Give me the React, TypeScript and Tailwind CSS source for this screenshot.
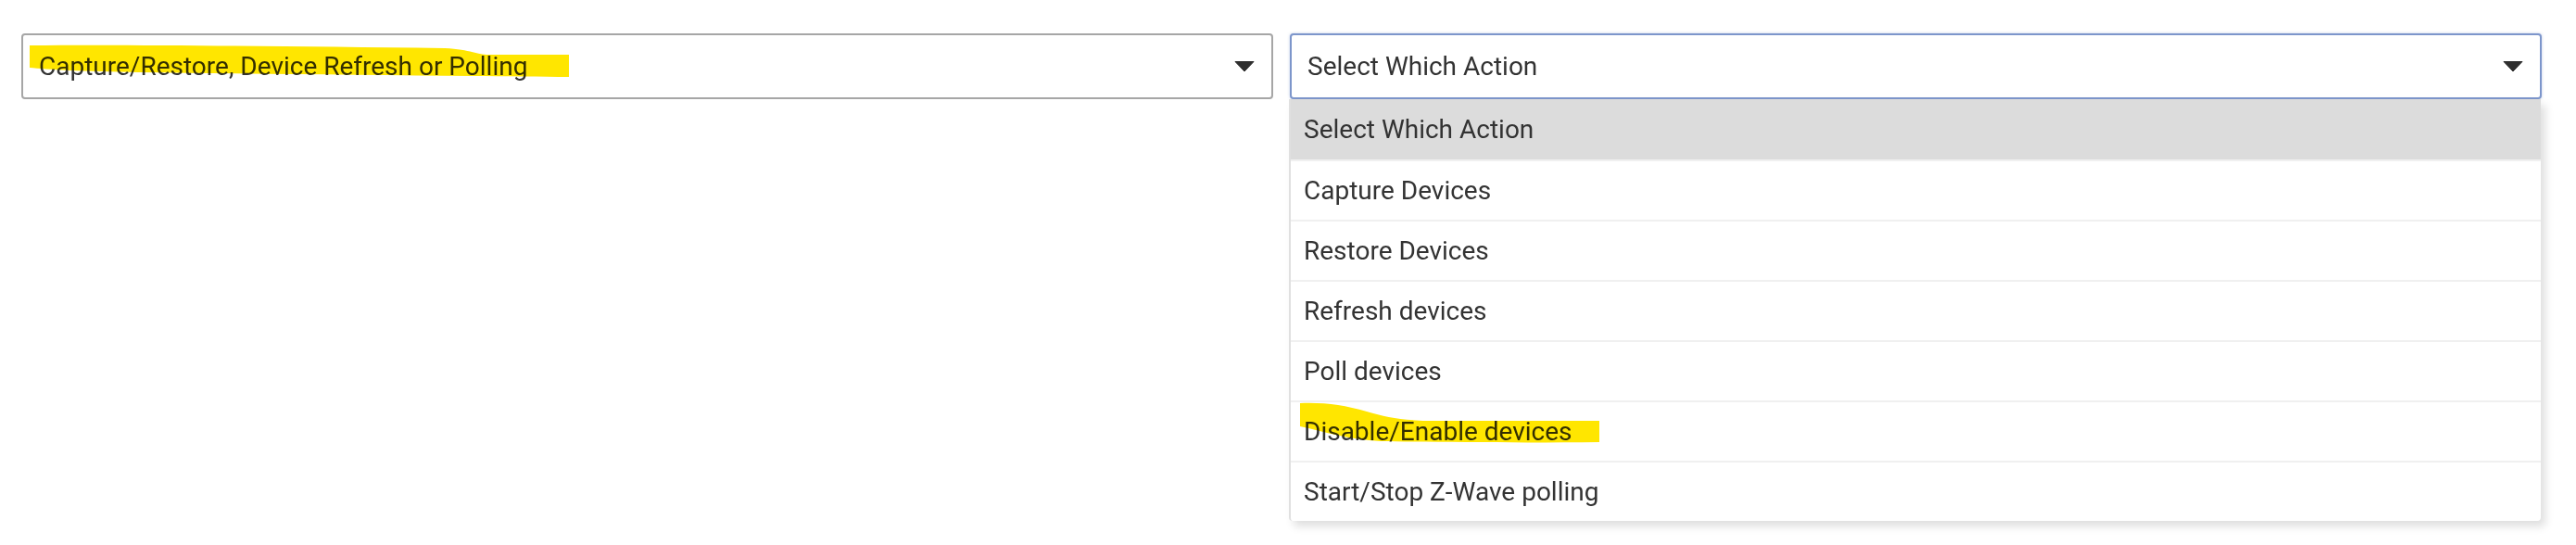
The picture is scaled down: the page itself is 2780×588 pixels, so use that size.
import React from 'react';

const actions = [
  'Select Which Action',
  'Capture Devices',
  'Restore Devices',
  'Refresh devices',
  'Poll devices',
  'Disable/Enable devices',
  'Start/Stop Z-Wave polling',
];

const Caret = () => (
  <svg width="22" height="13" viewBox="0 0 22 13" className="shrink-0">
    <path d="M1 1.5 L21 1.5 L11 12 Z" fill="#2e2e2e" stroke="#2e2e2e" strokeWidth="1" strokeLinejoin="round" />
  </svg>
);

const SelectBox: React.FC<{ label: string; focused?: boolean; children?: React.ReactNode }> = ({ label, focused, children }) => (
  <div className="relative">
    <div
      className={`flex h-[71px] items-center justify-between rounded-[4px] border-2 bg-white pl-[17px] pr-[18px] text-[28px] text-[#333] ${
        focused ? 'border-[#7d96cb] shadow-[0_0_3px_rgba(125,150,203,0.5)]' : 'border-[#a6a6a6]'
      }`}
    >
      <span>{label}</span>
      <Caret />
    </div>
    {children}
  </div>
);

export default function App() {
  return (
    <div className="relative h-[588px] w-full bg-white pl-[23px] pr-[37px] pt-[36px] font-['Roboto',sans-serif]">
      <div className="grid grid-cols-2 gap-[18px]">
        <SelectBox label="Capture/Restore, Device Refresh or Polling" />
        <SelectBox label="Select Which Action" focused>
          <ul className="absolute left-[-1px] right-[1px] top-full z-10 overflow-hidden rounded-b-[4px] border-l-2 border-[#e0e0e0] bg-white text-[28px] text-[#333] shadow-[5px_6px_10px_rgba(0,0,0,0.13)]">
            {actions.map((a, i) => (
              <li
                key={a}
                className={`flex h-[65px] items-center pl-[14px] ${
                  i === 0 ? 'bg-[#dcdcdc]' : 'border-t-2 border-[#f0f0f0]'
                }`}
              >
                {a}
              </li>
            ))}
          </ul>
        </SelectBox>
      </div>

      {/* highlighter marks drawn over the screenshot */}
      <svg
        className="pointer-events-none absolute inset-0 z-20 h-full w-full mix-blend-multiply"
        viewBox="0 0 2780 588"
        preserveAspectRatio="none"
      >
        <path
          d="M32 49 C150 48 300 50 480 52 C505 53 512 58 525 59 L614 59 L614 83 C500 82 300 80 150 78 C90 77 50 75 32 73 Z"
          fill="#ffe600"
        />
        <path
          d="M1403 435 C1430 434 1450 437 1475 444 C1495 450 1510 453 1540 454 L1726 454 L1726 477 C1640 478 1540 477 1490 476 C1455 474 1430 466 1403 460 Z"
          fill="#ffe600"
        />
      </svg>
    </div>
  );
}
